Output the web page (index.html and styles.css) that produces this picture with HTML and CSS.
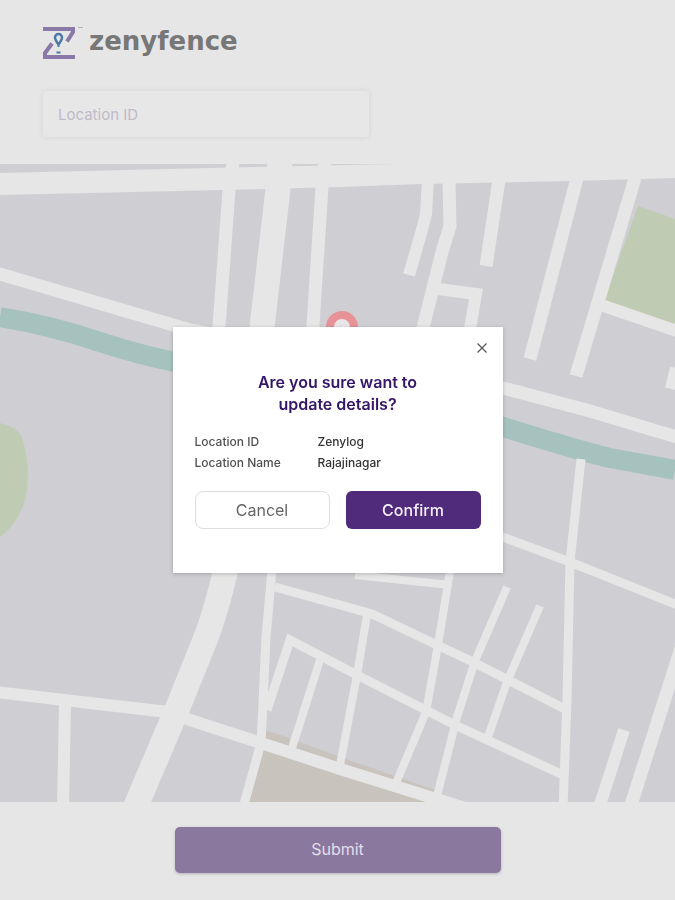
FILE: index.html
```html
<!DOCTYPE html>
<html lang="en">
<head>
<meta charset="utf-8">
<meta name="viewport" content="width=device-width, initial-scale=1">
<title>zenyfence</title>
<link rel="stylesheet" href="styles.css">
</head>
<body>
<div class="page">
  <header class="header">
    <div class="brand">
      <svg class="brand-mark" viewBox="0 0 40 34" aria-hidden="true">
        <path class="mark-z" d="M0 3H30V6L24 15.500M9 17.500L2 27V31H32"/>
        <path class="mark-tm" d="M35 1.500H40"/>
        <path class="mark-pin" d="M15.500 21V17M13.500 26.500H17.500"/>
        <path class="mark-pin-head" d="M15.500 19C15 16.500 12 15 12 11.500A3.500 3.500 0 0 1 19 11.500C19 15 16 16.500 15.500 19Z"/>
      </svg>
      <span class="brand-name">zenyfence</span>
    </div>
    <input class="field" type="text" placeholder="Location ID" aria-label="Location ID">
  </header>

  <main class="map">
    <svg class="map-art" viewBox="0 163 675 639" preserveAspectRatio="xMidYMid slice" role="img" aria-label="Map">
      <path class="land" d="M0 164H395L230 167.500L0 173ZM0 195L223 190L340 187L421 184L570 181L675 178V802H0Z"/>
      <path class="park" d="M638 206L675 219V324L604 301ZM0 423Q16 427 21 435Q28 455 28 477Q27 500 20 513Q12 528 0 537Z"/>
      <path class="plaza" d="M265 731L275 733L340 757L435 790L440 802H249L262 745Z"/>
      <path class="river" d="M0 317Q50 325 100 342Q140 355 175 362L400 400L500 426Q580 451 610 458L675 470"/>
      <g class="roads">
        <path class="r26" d="M280 163L278 189L262 327L225 573Q215 615 205 640L178 707L135 808"/>
        <path class="r13" d="M233 163L229 190L218 340M325 163L322 187L312 340M-5 273L0 274L190 330L503 388L590 411L680 438M449 180L450 226L442 252L420 340M499 180L486 266M577 178L530 359M635 178L576 376M686 632L675 667L630 808"/>
        <path class="r12" d="M428 180L426 214L422 230L409 275M438 289L476 294L469 335M601 305L680 332M676 368L671 389M-5 692L167 712L190 720L261 743L340 769L465 808M65 705L63 808M624 730L599 808"/>
        <path class="r9" d="M581 459L570 562L567 700L563 808M500 536L570 562L680 606M275 587L340 605L372 614L475 663L567 710M267 710L290 640L357 675L455 725L563 775M272 570L266 637L263 703L261 743L243 808"/>
        <path class="r8" d="M355 575L450 585M451 565L438 645L426 712L396 783M320 660L292 748M367 615L357 675L340 765M507 587L475 661L457 717L436 800M540 606L507 682L488 737"/>
      </g>
      <circle class="pin" cx="342" cy="327" r="12"/>
    </svg>
  </main>

  <footer class="footer">
    <button class="submit" type="submit">Submit</button>
  </footer>
</div>

<div class="overlay">
  <section class="dialog" role="dialog" aria-modal="true" aria-labelledby="dialog-title">
    <button class="close" type="button" aria-label="Close">
      <svg class="close-icon" viewBox="0 0 10 10" aria-hidden="true"><path d="M.5 .5L9.500 9.500M9.500 .5L.5 9.500"/></svg>
    </button>
    <h1 class="title" id="dialog-title">Are you sure want to<br>update details?</h1>
    <dl class="details">
      <dt>Location ID</dt><dd>Zenylog</dd>
      <dt>Location Name</dt><dd>Rajajinagar</dd>
    </dl>
    <div class="actions">
      <button class="btn btn-cancel" type="button">Cancel</button>
      <button class="btn btn-confirm" type="button">Confirm</button>
    </div>
  </section>
</div>
</body>
</html>
```

FILE: styles.css
```css
* { box-sizing: border-box; }

body {
  margin: 0;
  background: #e6e6e6;
  font-family: Inter, "Liberation Sans", sans-serif;
}

button, input { font: inherit; }

.page {
  display: flex;
  flex-direction: column;
  min-height: 100vh;
}

.header { padding: 26px 43px; }

.brand {
  display: flex;
  align-items: center;
  gap: 6px;
  height: 34px;
  margin-bottom: 31px;
}

.brand-mark {
  width: 40px;
  height: 34px;
  fill: none;
}

.mark-z { stroke: #8a78a8; stroke-width: 4; }
.mark-tm { stroke: #b5b2b8; stroke-width: 1; }
.mark-pin { stroke: #4a78a8; stroke-width: 2; }
.mark-pin-head { stroke: #4a78a8; stroke-width: 2.5; }

.brand-name {
  font-family: "DejaVu Sans", sans-serif;
  font-size: 26px;
  font-weight: 700;
  line-height: 30px;
  padding-bottom: 4px;
  color: #777;
}

.field {
  display: block;
  width: 100%;
  max-width: 326px;
  height: 46px;
  padding: 0 15px;
  border: 0;
  border-radius: 4px;
  background: #e7e7e7;
  box-shadow: 0 0 5px rgba(80, 90, 90, .13);
  font-size: 15px;
  color: #777;
}

.field::placeholder { color: #bfbac7; opacity: 1; }

.map {
  flex: 1 1 0;
  min-height: 400px;
  display: grid;
}

.map-art {
  width: 100%;
  height: 100%;
  min-height: 0;
}

.land { fill: #cfced3; }
.park { fill: #bfcbb3; }
.plaza { fill: #c8c4bd; }
.river { fill: none; stroke: #a5c2bf; stroke-width: 20; }
.roads { fill: none; stroke: #e6e6e6; }
.r26 { stroke-width: 25; }
.r13 { stroke-width: 13; }
.r12 { stroke-width: 12; }
.r9 { stroke-width: 9; }
.r8 { stroke-width: 8; }
.pin { fill: #e8e6e6; stroke: #e69297; stroke-width: 8; }

.footer {
  display: flex;
  justify-content: center;
  padding: 25px 24px 27px;
}

.submit {
  width: 100%;
  max-width: 326px;
  height: 46px;
  padding: 0 0 2px;
  border: 0;
  border-radius: 5px;
  background: #8b789f;
  box-shadow: 0 1px 3px rgba(70, 50, 90, .3);
  font-size: 16px;
  color: #e4dde9;
}

.overlay {
  position: fixed;
  inset: 0;
  display: grid;
  place-items: center;
  padding: 16px;
}

.dialog {
  position: relative;
  width: 100%;
  max-width: 330px;
  padding: 44px 22px;
  background: #fff;
  box-shadow: 0 1px 4px rgba(0, 0, 0, .22);
}

.close {
  position: absolute;
  top: 10px;
  right: 10px;
  display: grid;
  place-items: center;
  width: 22px;
  height: 22px;
  padding: 0;
  border: 0;
  background: none;
}

.close-icon {
  width: 10px;
  height: 10px;
  fill: none;
  stroke: #555;
  stroke-width: 1.2;
}

.title {
  margin: 0 0 16px;
  font-size: 16px;
  font-weight: 600;
  line-height: 22px;
  text-align: center;
  color: #341568;
}

.details {
  display: grid;
  grid-template-columns: 123px 1fr;
  margin: 0 0 18px;
  font-size: 12px;
  font-weight: 500;
  line-height: 21px;
  color: #505050;
}

.details dd { margin: 0; color: #333; }

.actions {
  display: grid;
  grid-template-columns: 1fr 1fr;
  gap: 16px;
}

.btn {
  height: 38px;
  padding: 0;
  border: 0;
  border-radius: 6px;
  font-size: 16px;
}

.btn-cancel {
  border: 1px solid #dedede;
  border-radius: 8px;
  background: #fff;
  color: #666;
}

.btn-confirm {
  background: #502b7b;
  font-weight: 500;
  color: #f5effa;
}
```
